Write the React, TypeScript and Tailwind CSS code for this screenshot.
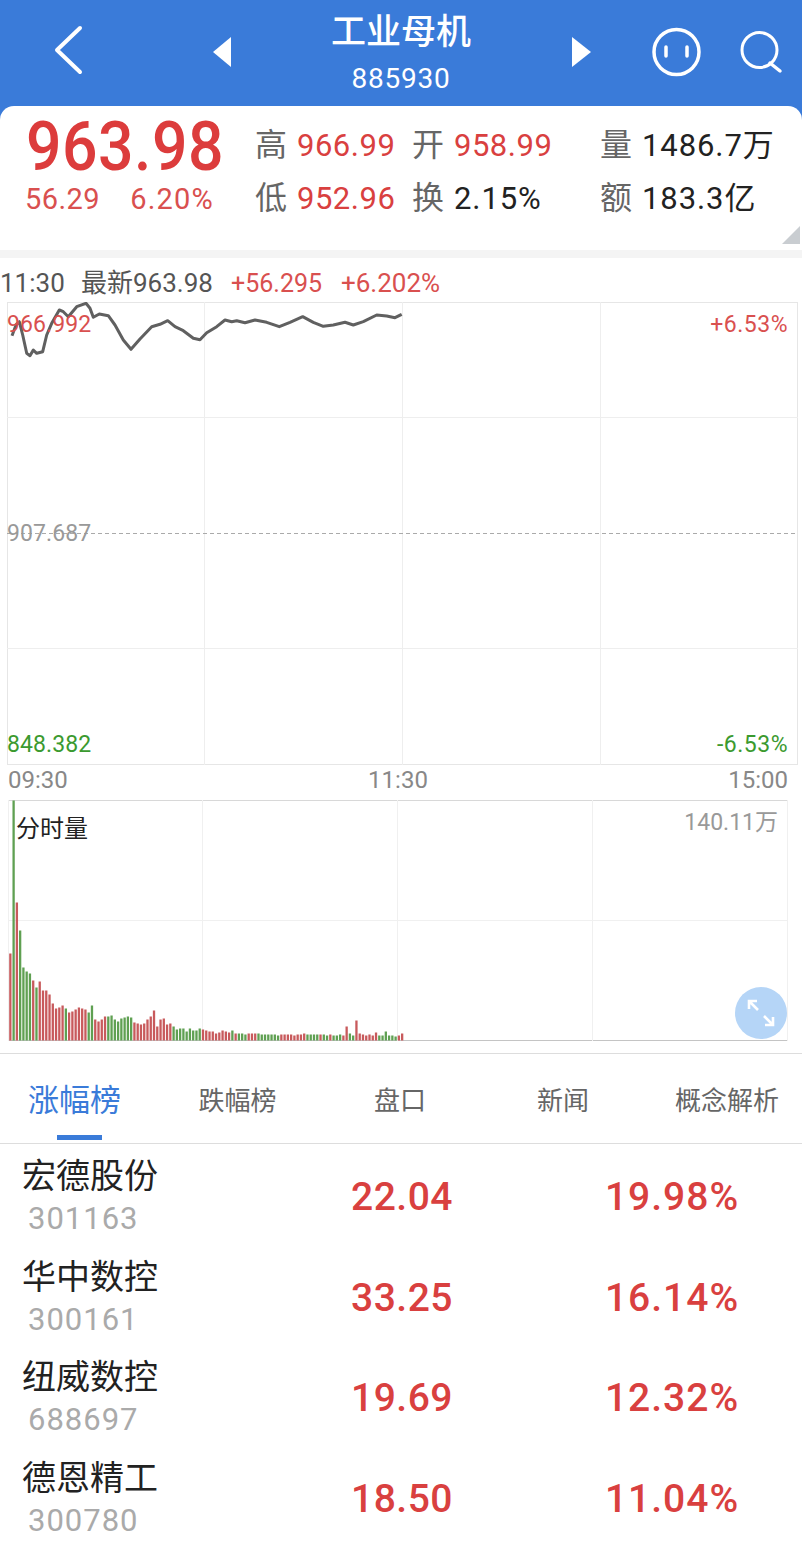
import React from "react";

const SANS = "font-['Roboto','Noto_Sans_CJK_SC',sans-serif]";

// minute price trace, x/y scaled 3x relative to the chart's 11:30 strip
const trace: [number, number][] = [
  [36, 212], [48, 180], [58, 170], [68, 210], [80, 265], [90, 272], [100, 255], [110, 265], [128, 260],
  [140, 210], [155, 175], [178, 135], [190, 140], [205, 155], [230, 125], [258, 115], [270, 130], [280, 157],
  [298, 147], [325, 152], [345, 180], [370, 225], [393, 253], [420, 222], [455, 185], [480, 178], [503, 167],
  [525, 185], [550, 197], [580, 220], [600, 224], [620, 203], [650, 185], [675, 165], [695, 170], [710, 167],
  [735, 173], [765, 165], [800, 172], [838, 185], [870, 172], [908, 155], [940, 172], [970, 184], [1000, 180],
  [1035, 172], [1060, 180], [1090, 170], [1130, 150], [1160, 153], [1185, 158], [1205, 148],
];

// per-minute volume: height in px, r = up, g = down
const volumes: [number, "r" | "g"][] = [
  [87, "r"], [240, "g"], [138, "r"], [110, "g"], [73, "g"], [69, "g"], [67, "g"], [60, "r"], [53, "g"], [59, "r"],
  [50, "r"], [50, "r"], [46, "r"], [37, "r"], [32, "r"], [33, "r"], [35, "r"], [32, "g"], [28, "r"], [29, "r"],
  [31, "r"], [33, "r"], [32, "r"], [31, "r"], [28, "g"], [35, "g"], [21, "r"], [19, "r"], [21, "r"], [24, "r"],
  [24, "g"], [25, "g"], [21, "g"], [19, "g"], [22, "g"], [23, "g"], [24, "g"], [23, "g"], [18, "r"], [17, "r"],
  [16, "r"], [17, "r"], [21, "r"], [24, "r"], [30, "r"], [14, "r"], [21, "r"], [22, "r"], [16, "r"], [17, "r"],
  [14, "g"], [11, "g"], [12, "g"], [12, "g"], [9, "g"], [12, "g"], [10, "g"], [10, "g"], [12, "g"], [11, "r"],
  [10, "r"], [9, "r"], [9, "r"], [7, "r"], [8, "r"], [10, "r"], [9, "r"], [8, "r"], [10, "g"], [7, "r"],
  [7, "g"], [7, "g"], [6, "g"], [7, "r"], [7, "r"], [7, "r"], [7, "g"], [6, "g"], [6, "g"], [6, "g"],
  [6, "g"], [6, "g"], [5, "g"], [6, "r"], [6, "r"], [6, "r"], [6, "r"], [5, "r"], [6, "r"], [6, "r"],
  [7, "r"], [6, "g"], [6, "g"], [6, "g"], [6, "g"], [6, "r"], [6, "g"], [5, "g"], [6, "r"], [5, "g"],
  [5, "g"], [6, "g"], [5, "r"], [14, "r"], [7, "g"], [5, "g"], [20, "r"], [7, "r"], [6, "r"], [5, "r"],
  [6, "r"], [5, "r"], [8, "r"], [5, "g"], [5, "g"], [9, "g"], [5, "g"], [5, "g"], [4, "g"], [5, "r"], [7, "r"],
];

const stocks = [
  { name: "宏德股份", code: "301163", price: "22.04", pct: "19.98%" },
  { name: "华中数控", code: "300161", price: "33.25", pct: "16.14%" },
  { name: "纽威数控", code: "688697", price: "19.69", pct: "12.32%" },
  { name: "德恩精工", code: "300780", price: "18.50", pct: "11.04%" },
];

const tabs = ["涨幅榜", "跌幅榜", "盘口", "新闻", "概念解析"];

const Stat = ({ label, value, red }: { label: string; value: string; red?: boolean }) => (
  <div className="flex items-center gap-[10px]">
    <span className="text-[32px] leading-[53px] text-[#666666]">{label}</span>
    <span
      className={`text-[31px] leading-[53px] ${red ? "tracking-[0.5px] text-[#d9403f]" : "tracking-[0.9px] text-[#222222]"}`}
    >
      {value}
    </span>
  </div>
);

const Header = () => (
  <div className="flex h-[106px] items-start text-white">
    <svg width="802" height="106" viewBox="0 0 802 106" fill="none" stroke="white" className="absolute left-0 top-0">
      <path d="M80 28 L57 50 L80 72" strokeWidth="4" strokeLinecap="round" strokeLinejoin="round" />
      <path d="M231 37 V67 L213 52 Z" fill="white" stroke="none" />
      <path d="M572 37 V67 L591 52 Z" fill="white" stroke="none" />
      <circle cx="676.5" cy="52" r="22.5" strokeWidth="3.5" />
      <path d="M666 47 V56 M687 47 V56" strokeWidth="3.5" strokeLinecap="round" />
      <circle cx="759.5" cy="50" r="17.5" strokeWidth="3" />
      <path d="M770 63 L780 71" strokeWidth="3.5" strokeLinecap="round" />
    </svg>
    <div className="flex w-full flex-col items-center pt-[11px]">
      <span className="text-[35px] font-medium leading-[44px]">工业母机</span>
      <span className="mt-[6px] text-[28px] leading-[36px] tracking-[0.8px]">885930</span>
    </div>
  </div>
);

const Quote = () => (
  <div className="relative flex h-[144px] rounded-t-[14px] bg-white pt-[13px]">
    <div className="w-[255px] pl-[26px]">
      <div className="origin-left scale-x-[0.92] text-[68px] font-medium leading-[56px] tracking-[0.5px] text-[#dc3c3c]">963.98</div>
      <div className="-ml-px mt-[4px] flex w-[189px] justify-between text-[29px] leading-[40px] tracking-[0.4px] text-[#d9504f]">
        <span>56.29</span>
        <span className="tracking-[1.2px]">6.20%</span>
      </div>
    </div>
    <div className="grid h-[106px] grid-cols-[157px_188px_auto]">
      <Stat label="高" value="966.99" red />
      <Stat label="开" value="958.99" red />
      <Stat label="量" value="1486.7万" />
      <Stat label="低" value="952.96" red />
      <Stat label="换" value="2.15%" />
      <Stat label="额" value="183.3亿" />
    </div>
    <div className="absolute bottom-[6px] right-[2px] h-[18px] w-[18px] bg-[#c9cdd1] [clip-path:polygon(100%_0,100%_100%,0_100%)]" />
  </div>
);

const PriceChart = () => (
  <div className="relative ml-[7px] h-[463px] w-[791px] border border-[#e6e6e6]">
    <svg width="791" height="463" viewBox="0 0 791 463" fill="none" className="absolute -left-px -top-px">
      <path d="M197.5 0 V463 M395.5 0 V463 M593.5 0 V463 M0 115.5 H791 M0 346.5 H791" stroke="#eeeeee" />
      <path d="M0 231.5 H791" stroke="#aaaaaa" strokeDasharray="4 3" />
      <polyline
        points={trace.map(([x, y]) => `${(x / 3 - 7).toFixed(1)},${(y / 3 - 37).toFixed(1)}`).join(" ")}
        stroke="#606060"
        strokeWidth="3"
        strokeLinejoin="round"
      />
    </svg>
    <span className="absolute -left-px top-[7px] text-[23px] leading-[30px] tracking-[0.1px] text-[#d9504f]">966.992</span>
    <span className="absolute -left-px top-[216px] text-[23px] leading-[30px] tracking-[0.1px] text-[#999999]">907.687</span>
    <span className="absolute -left-px bottom-[4px] text-[23px] leading-[30px] tracking-[0.1px] text-[#3b9a2f]">848.382</span>
    <span className="absolute right-[9px] top-[7px] text-[23px] leading-[30px] tracking-[0.5px] text-[#d9504f]">+6.53%</span>
    <span className="absolute bottom-[4px] right-[9px] text-[23px] leading-[30px] tracking-[0.5px] text-[#3b9a2f]">-6.53%</span>
  </div>
);

const VolumeChart = () => (
  <div className="relative ml-[8px] h-[241px] w-[780px] border-b border-t border-b-[#c4c4c4] border-t-[#d8d8d8]">
    <svg width="780" height="241" viewBox="0 0 780 241" fill="none" className="absolute left-0 top-[-1px]">
      <path d="M0.5 0 V241 M194.5 0 V241 M389.5 0 V241 M584.5 0 V241 M779.5 0 V241 M0 120.5 H780" stroke="#f0f0f0" />
      {volumes.map(([h, side], i) => (
        <rect
          key={i}
          x={1.2 + i * 3.265}
          y={240.5 - h}
          width="2.3"
          height={h}
          fill={side === "r" ? "#c85a5c" : "#5fa052"}
        />
      ))}
    </svg>
    <span className="absolute left-[8px] top-[12px] text-[24px] leading-[32px] text-[#222222]">分时量</span>
    <span className="absolute right-[10px] top-[6px] text-[23px] leading-[32px] text-[#999999]">140.11万</span>
    <div className="absolute left-[727px] top-[186px] flex h-[52px] w-[52px] items-center justify-center rounded-full bg-[#b5d5f7]">
      <svg width="30" height="30" viewBox="0 0 30 30" fill="none" stroke="white" strokeWidth="2.6">
        <path d="M3 11 V3 H11 M3 3 L12 12 M27 19 V27 H19 M27 27 L18 18" />
      </svg>
    </div>
  </div>
);

export default function App() {
  return (
    <div className={`h-[1560px] w-[802px] overflow-hidden bg-white ${SANS}`}>
      <div className="relative bg-[#3a7bd9]">
        <Header />
        <Quote />
      </div>
      <div className="h-[8px] bg-[#f4f4f4]" />

      <div className="flex h-[44px] items-center pt-[7px] text-[26px] text-[#555555]">
        <span className="w-[81px]">11:30</span>
        <span className="w-[150px]">最新963.98</span>
        <span className="w-[110px] text-[25px] text-[#d9504f]">+56.295</span>
        <span className="text-[#d9504f]">+6.202%</span>
      </div>
      <PriceChart />
      <div className="flex h-[35px] items-center justify-between pb-[6px] pl-[8px] pr-[14px] text-[24px] text-[#888888]">
        <span>09:30</span>
        <span>11:30</span>
        <span>15:00</span>
      </div>
      <VolumeChart />

      <div className="mt-[12px] grid h-[91px] grid-cols-[149px_177px_148px_178px_150px] border-b border-t border-[#dddddd]">
        {tabs.map((tab, i) => (
          <div key={tab} className="relative flex items-center justify-center pt-[5px]">
            <span className={i === 0 ? "text-[31px] text-[#3a7bd9]" : "text-[26px] text-[#666666]"}>{tab}</span>
            {i === 0 && <div className="absolute bottom-[3px] left-[57px] h-[5px] w-[45px] bg-[#3a7bd9]" />}
          </div>
        ))}
      </div>

      <div className="pt-[3px]">
        {stocks.map((s) => (
          <div key={s.code} className="grid h-[100.7px] grid-cols-[272px_260px_270px] items-center">
            <div className="pb-[5px] pl-[22px]">
              <div className="text-[34px] leading-[46px] text-[#222222]">{s.name}</div>
              <div className="mt-[2px] pl-[6px] text-[31px] leading-[36px] tracking-[1px] text-[#aaaaaa]">{s.code}</div>
            </div>
            <div className="text-center text-[39px] font-medium tracking-[0.5px] text-[#d9403f]">{s.price}</div>
            <div className="pl-[10px] text-center text-[39px] font-medium tracking-[1px] text-[#d9403f]">{s.pct}</div>
          </div>
        ))}
      </div>
    </div>
  );
}
